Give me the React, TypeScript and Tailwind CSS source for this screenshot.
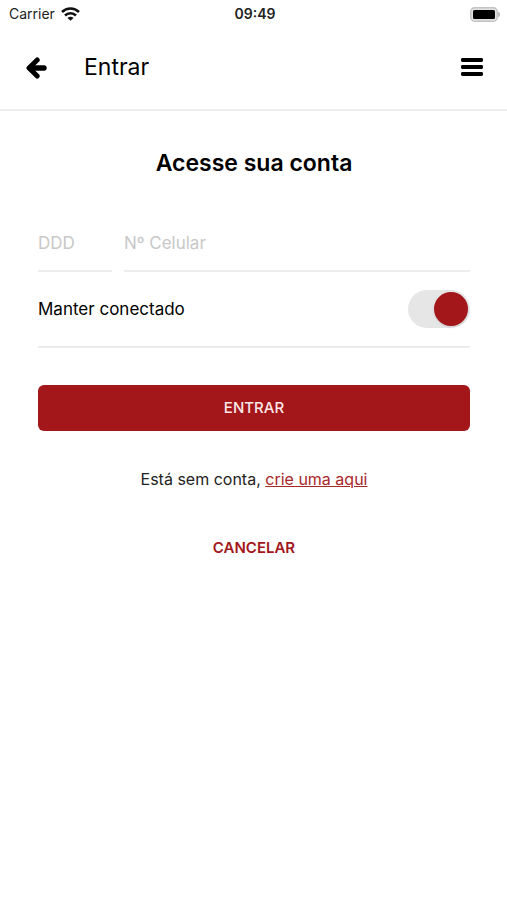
import { useState } from "react";

export default function App() {
  return (
    <div className="min-h-screen bg-white text-black font-['Inter',sans-serif]">
      <StatusBar />
      <Header title="Entrar" />
      <LoginForm />
    </div>
  );
}

function StatusBar() {
  return (
    <div className="grid grid-cols-3 items-center h-7 pl-[9px] pr-[6px] text-[14px] leading-5 text-[#222]">
      <div className="flex items-center gap-[6px]">
        <span>Carrier</span>
        <WifiIcon />
      </div>
      <span className="text-center font-semibold">09:49</span>
      <div className="flex justify-end">
        <BatteryIcon />
      </div>
    </div>
  );
}

function Header({ title }: { title: string }) {
  return (
    <header className="flex items-center h-[83px] pl-[25px] pr-6 pb-[3px] border-b-2 border-[#efefef]">
      <button type="button" aria-label="Voltar">
        <BackIcon />
      </button>
      <h1 className="flex-1 ml-9 text-[23px] leading-8">{title}</h1>
      <button type="button" aria-label="Menu">
        <MenuIcon />
      </button>
    </header>
  );
}

function LoginForm() {
  const [keep, setKeep] = useState(true);

  return (
    <form className="flex flex-col pl-[38px] pr-[37px] pt-9" onSubmit={(e) => e.preventDefault()}>
      <h2 className="text-center text-[23px] leading-8 font-semibold">Acesse sua conta</h2>

      <div className="flex gap-3 mt-9">
        <input
          type="tel"
          aria-label="DDD"
          placeholder="DDD"
          className="w-[74px] h-[57px] border-b-2 border-[#ededed] text-[17px] placeholder:text-[#c8c8c8] outline-none"
        />
        <input
          type="tel"
          aria-label="Nº Celular"
          placeholder="Nº Celular"
          className="flex-1 min-w-0 h-[57px] border-b-2 border-[#ededed] text-[17px] placeholder:text-[#c8c8c8] outline-none"
        />
      </div>

      <label className="flex items-center justify-between h-19 border-b-2 border-[#ededed] text-[17px] leading-6">
        <span>Manter conectado</span>
        <input
          type="checkbox"
          role="switch"
          checked={keep}
          onChange={(e) => setKeep(e.target.checked)}
          className="appearance-none flex items-center w-[62px] h-[38px] p-[2px] rounded-full bg-[#e6e6e6] before:block before:size-[34px] before:rounded-full before:bg-white before:shadow checked:justify-end checked:before:bg-[#a3161a]"
        />
      </label>

      <button type="submit" className="h-[46px] mt-[37px] rounded-md bg-[#a3161a] text-[15px] font-medium text-[#fbe9e9]">
        ENTRAR
      </button>

      <p className="mt-9 text-center text-[16px] leading-6 text-[#222]">
        Está sem conta,{" "}
        <a href="#" className="text-[#a9272c] underline">
          crie uma aqui
        </a>
      </p>

      <button type="button" className="self-center h-10 mt-[37px] text-[15px] font-semibold text-[#a3161a]">
        CANCELAR
      </button>
    </form>
  );
}

function WifiIcon() {
  return (
    <svg width="19" height="14" viewBox="0 0 19 14" fill="none" stroke="#111" strokeWidth="2.6">
      <path d="M1 5a12.2 12.2 0 0 1 17 0" />
      <path d="M4 8.5a7.8 7.8 0 0 1 11 0" />
      <path d="M9.5 13.8 6.5 11a4.1 4.1 0 0 1 6 0z" fill="#111" stroke="none" />
    </svg>
  );
}

function BatteryIcon() {
  return (
    <svg width="31" height="15" viewBox="0 0 31 15">
      <rect x="0.75" y="0.75" width="26.5" height="13.5" rx="4" fill="#e2e2e2" stroke="#c4c4c4" strokeWidth="1.5" />
      <rect x="3" y="3" width="22" height="9" rx="1.5" fill="#000" />
      <path d="M28.2 4.8c2.6 1 2.6 4.4 0 5.4z" fill="#b4b4b4" />
    </svg>
  );
}

function BackIcon() {
  return (
    <svg width="23" height="24" viewBox="0 0 23 24" fill="none" stroke="#000" strokeLinecap="round" strokeLinejoin="round">
      <path d="M12.2 5 4 13l8.2 8" strokeWidth="5" />
      <path d="M5 13h14" strokeWidth="5.4" />
      <path d="M4.5 13 9 8.6v8.8z" fill="#000" strokeWidth="2" />
    </svg>
  );
}

function MenuIcon() {
  return (
    <svg width="22" height="20" viewBox="0 0 22 20">
      <rect y="1" width="22" height="4" rx="1.4" />
      <rect y="8" width="22" height="4" rx="1.4" />
      <rect y="15" width="22" height="4" rx="1.4" />
    </svg>
  );
}
